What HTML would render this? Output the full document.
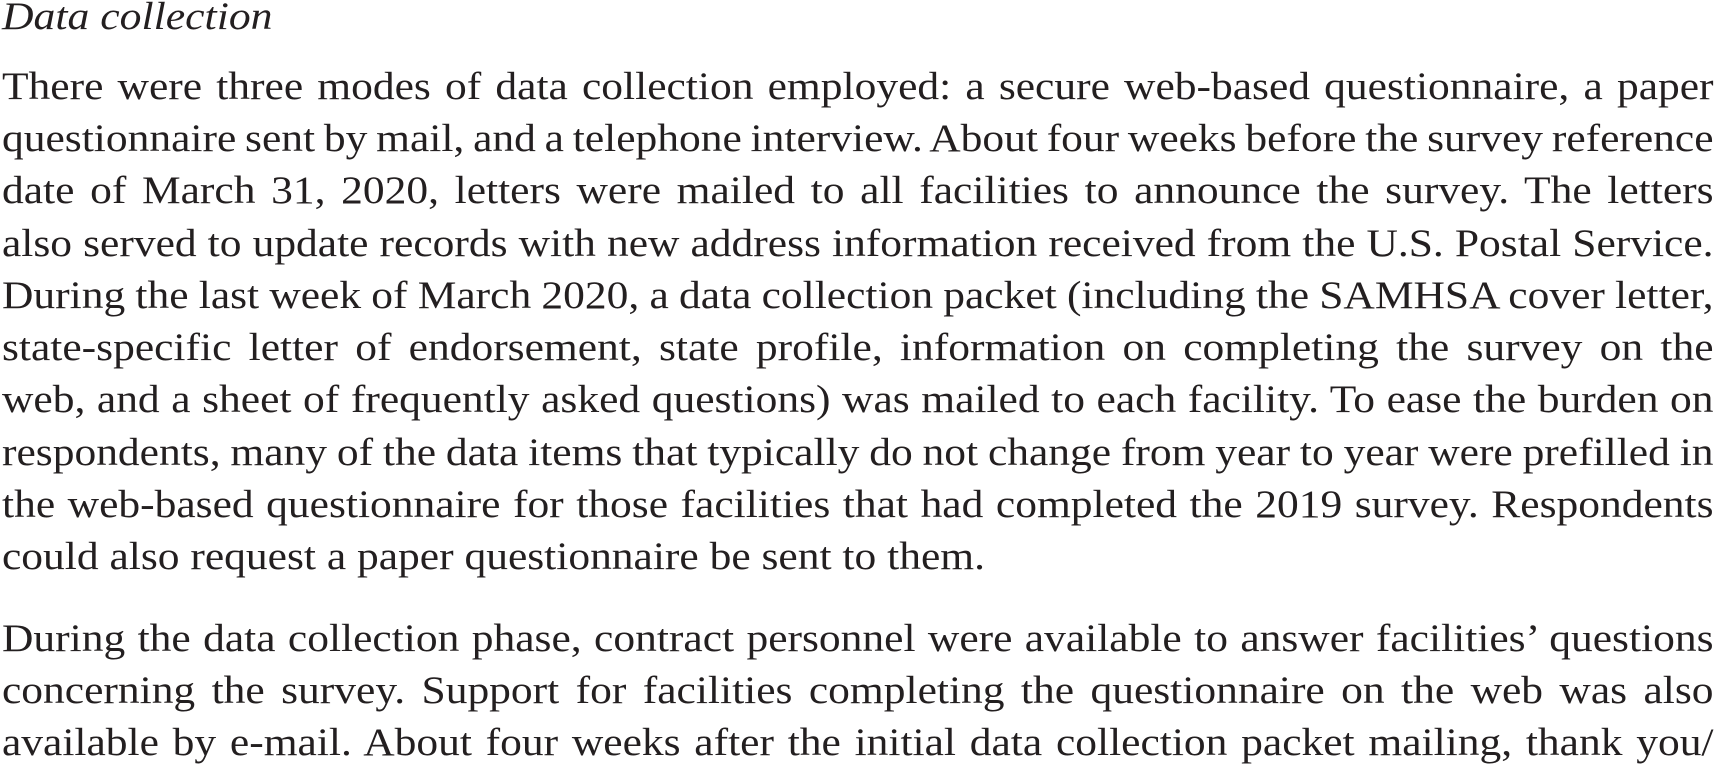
<!DOCTYPE html>
<html><head><meta charset="utf-8"><style>
html,body{margin:0;padding:0;background:#fff;width:1716px;height:767px;overflow:hidden}
body{font-family:"Liberation Serif",serif;font-size:39px;color:#231f20;position:relative}
.t{position:absolute;left:2px;top:-9.3px;line-height:52.3px;font-style:italic;white-space:nowrap;transform:scaleX(1.12);transform-origin:0 0}
.p{position:absolute;left:2px;width:1535px;line-height:52.3px;transform:scaleX(1.115);transform-origin:0 0}
.l{text-align:justify;text-align-last:justify;white-space:nowrap;height:52.3px;word-spacing:-3px}
.l.e{text-align-last:left;word-spacing:0}
</style></head><body>
<div class="t">Data collection</div>
<div class="p" style="top:60.7px">
<div class="l">There were three modes of data collection employed: a secure web-based questionnaire, a paper</div>
<div class="l">questionnaire sent by mail, and a telephone interview. About four weeks before the survey reference</div>
<div class="l">date of March 31, 2020, letters were mailed to all facilities to announce the survey. The letters</div>
<div class="l">also served to update records with new address information received from the U.S. Postal Service.</div>
<div class="l">During the last week of March 2020, a data collection packet (including the SAMHSA cover letter,</div>
<div class="l">state-specific letter of endorsement, state profile, information on completing the survey on the</div>
<div class="l">web, and a sheet of frequently asked questions) was mailed to each facility. To ease the burden on</div>
<div class="l">respondents, many of the data items that typically do not change from year to year were prefilled in</div>
<div class="l">the web-based questionnaire for those facilities that had completed the 2019 survey. Respondents</div>
<div class="l e">could also request a paper questionnaire be sent to them.</div>
</div>
<div class="p" style="top:612.7px">
<div class="l">During the data collection phase, contract personnel were available to answer facilities’ questions</div>
<div class="l">concerning the survey. Support for facilities completing the questionnaire on the web was also</div>
<div class="l">available by e-mail. About four weeks after the initial data collection packet mailing, thank you/</div>
</div>
</body></html>
